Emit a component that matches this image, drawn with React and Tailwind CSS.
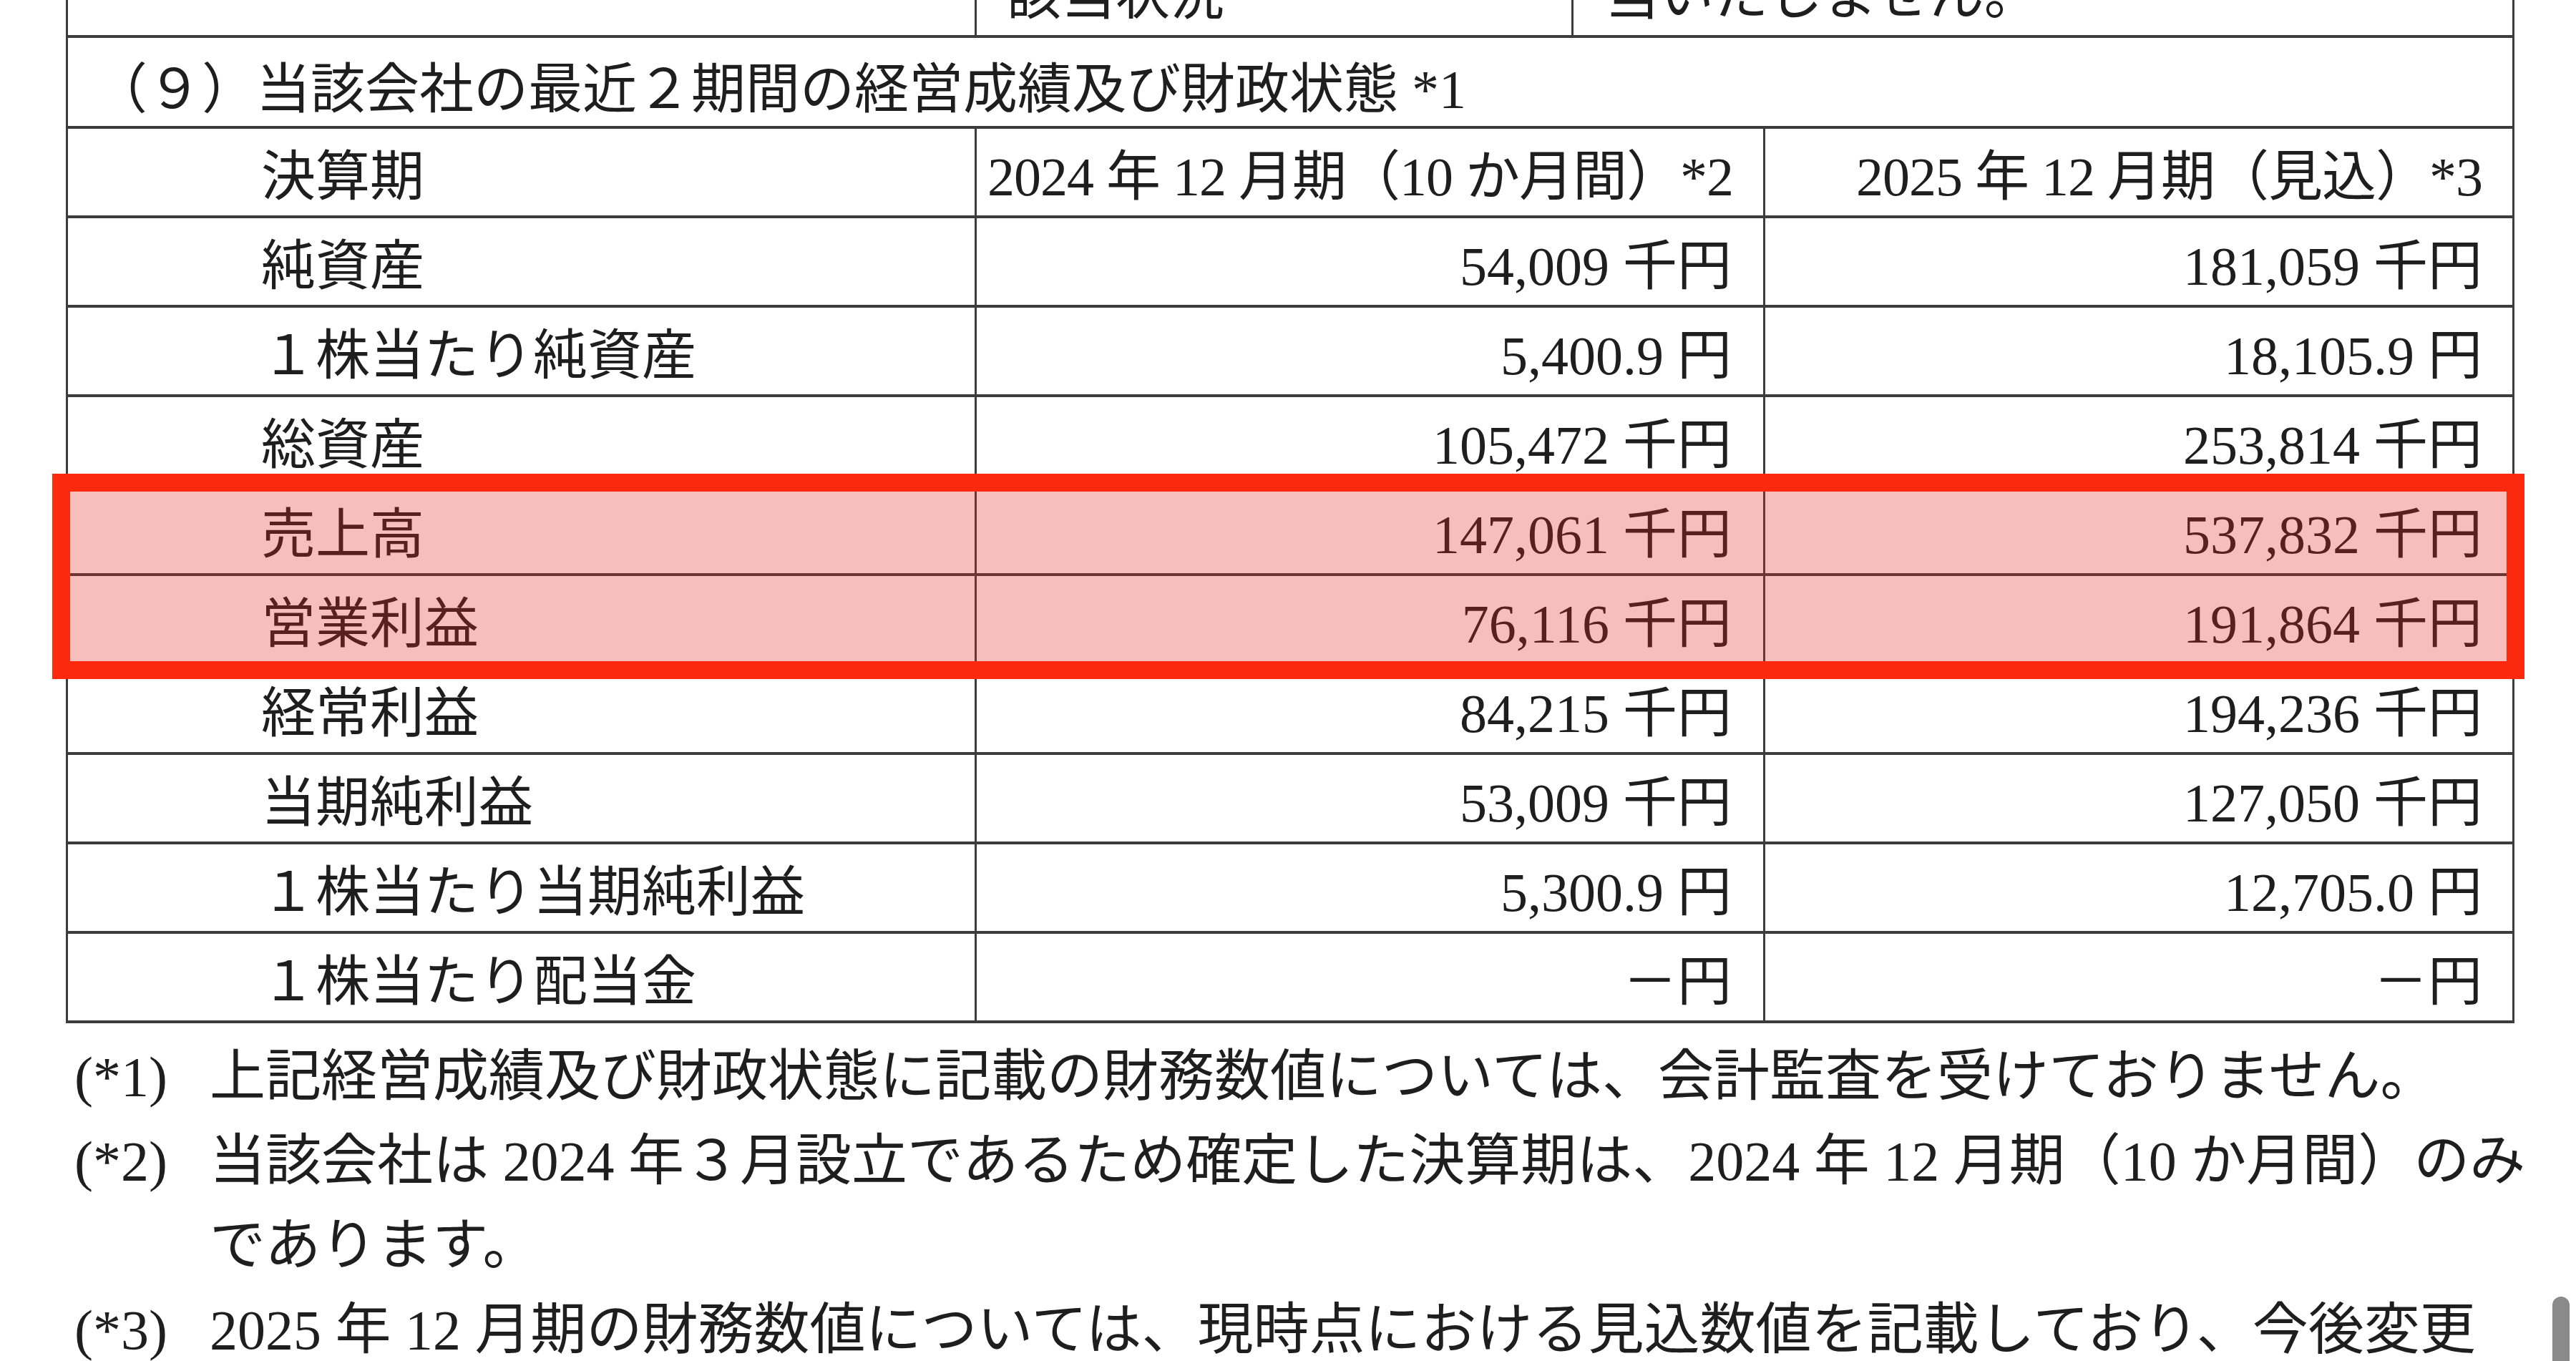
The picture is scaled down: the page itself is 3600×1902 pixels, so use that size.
const rows = [
  ["純資産", "54,009 千円", "181,059 千円"],
  ["１株当たり純資産", "5,400.9 円", "18,105.9 円"],
  ["総資産", "105,472 千円", "253,814 千円"],
  ["売上高", "147,061 千円", "537,832 千円"],
  ["営業利益", "76,116 千円", "191,864 千円"],
  ["経常利益", "84,215 千円", "194,236 千円"],
  ["当期純利益", "53,009 千円", "127,050 千円"],
  ["１株当たり当期純利益", "5,300.9 円", "12,705.0 円"],
  ["１株当たり配当金", "－円", "－円"],
];

const notes = [
  { mark: "(*1)", lines: ["上記経営成績及び財政状態に記載の財務数値については、会計監査を受けておりません。"] },
  {
    mark: "(*2)",
    lines: [
      "当該会社は 2024 年３月設立であるため確定した決算期は、2024 年 12 月期（10 か月間）のみ",
      "であります。",
    ],
  },
  { mark: "(*3)", lines: ["2025 年 12 月期の財務数値については、現時点における見込数値を記載しており、今後変更"] },
];

const App = () => {
  return (
    <div className="relative h-[1902px] w-[3600px] overflow-hidden whitespace-nowrap bg-white font-['Liberation_Serif','Noto_Sans_CJK_JP',serif] text-[#1e1e1e]">
      {/* table */}
      <div className="ml-[92px] w-[3422px] border-x-[3px] border-[#3c3c3c] text-[76px] leading-none">
        {/* previous item, only its last line shows at the top */}
        <div className="grid h-[53px] grid-cols-[1270px_834px_1fr] grid-rows-[49px] border-b-4 border-[#3c3c3c]">
          <div className="border-r-[3px] border-[#3c3c3c]" />
          <div className="flex min-h-0 items-end border-r-[3px] border-[#3c3c3c] pb-[17px] pl-[42px]">
            <span className="shrink-0">該当状況</span>
          </div>
          <div className="flex min-h-0 items-end pb-[17px] pl-[44px]">
            <span className="shrink-0">当いたしません。</span>
          </div>
        </div>

        {/* section title */}
        <div className="flex h-[127px] items-center border-b-4 border-[#3c3c3c] pl-[35px] pt-[20px]">
          （９）当該会社の最近２期間の経営成績及び財政状態 *1
        </div>

        {/* header */}
        <div className="grid h-[125px] grid-cols-[1270px_1102px_1fr] border-b-4 border-[#3c3c3c]">
          <div className="flex items-center border-r-[3px] border-[#3c3c3c] pl-[270px] pt-[12px]">
            決算期
          </div>
          <div className="flex items-center justify-end border-r-[3px] border-[#3c3c3c] pr-[42px] pt-[12px] tracking-[-1px]">
            2024 年 12 月期（10 か月間）*2
          </div>
          <div className="flex items-center justify-end pr-[42px] pt-[12px] tracking-[-1px]">
            2025 年 12 月期（見込）*3
          </div>
        </div>

        {rows.map((row) => (
          <div
            key={row[0]}
            className="grid h-[125px] grid-cols-[1270px_1102px_1fr] border-b-4 border-[#3c3c3c]"
          >
            <div className="flex items-center border-r-[3px] border-[#3c3c3c] pl-[270px] pt-[12px]">
              {row[0]}
            </div>
            <div className="flex items-center justify-end border-r-[3px] border-[#3c3c3c] pr-[44px] pt-[12px]">
              {row[1]}
            </div>
            <div className="flex items-center justify-end pr-[42px] pt-[12px]">{row[2]}</div>
          </div>
        ))}
      </div>

      {/* footnotes */}
      <div className="mt-[16px] flex flex-col pl-[104px] text-[78px] leading-[118px]">
        {notes.map((note) => (
          <div key={note.mark} className="flex">
            <div className="w-[189px] shrink-0">{note.mark}</div>
            <div className="flex flex-col">
              {note.lines.map((line) => (
                <div key={line}>{line}</div>
              ))}
            </div>
          </div>
        ))}
      </div>

      {/* red highlight box over 売上高 / 営業利益 */}
      <div className="absolute left-[73px] top-[662px] h-[287px] w-[3455px] border-[25px] border-[#fb2a0e] bg-[rgba(228,40,40,0.3)]" />

      {/* scroll indicator */}
      <div className="absolute right-[9px] top-[1812px] h-[120px] w-[24px] rounded-full bg-[#8a8a8a]" />
    </div>
  );
};

export default App;
